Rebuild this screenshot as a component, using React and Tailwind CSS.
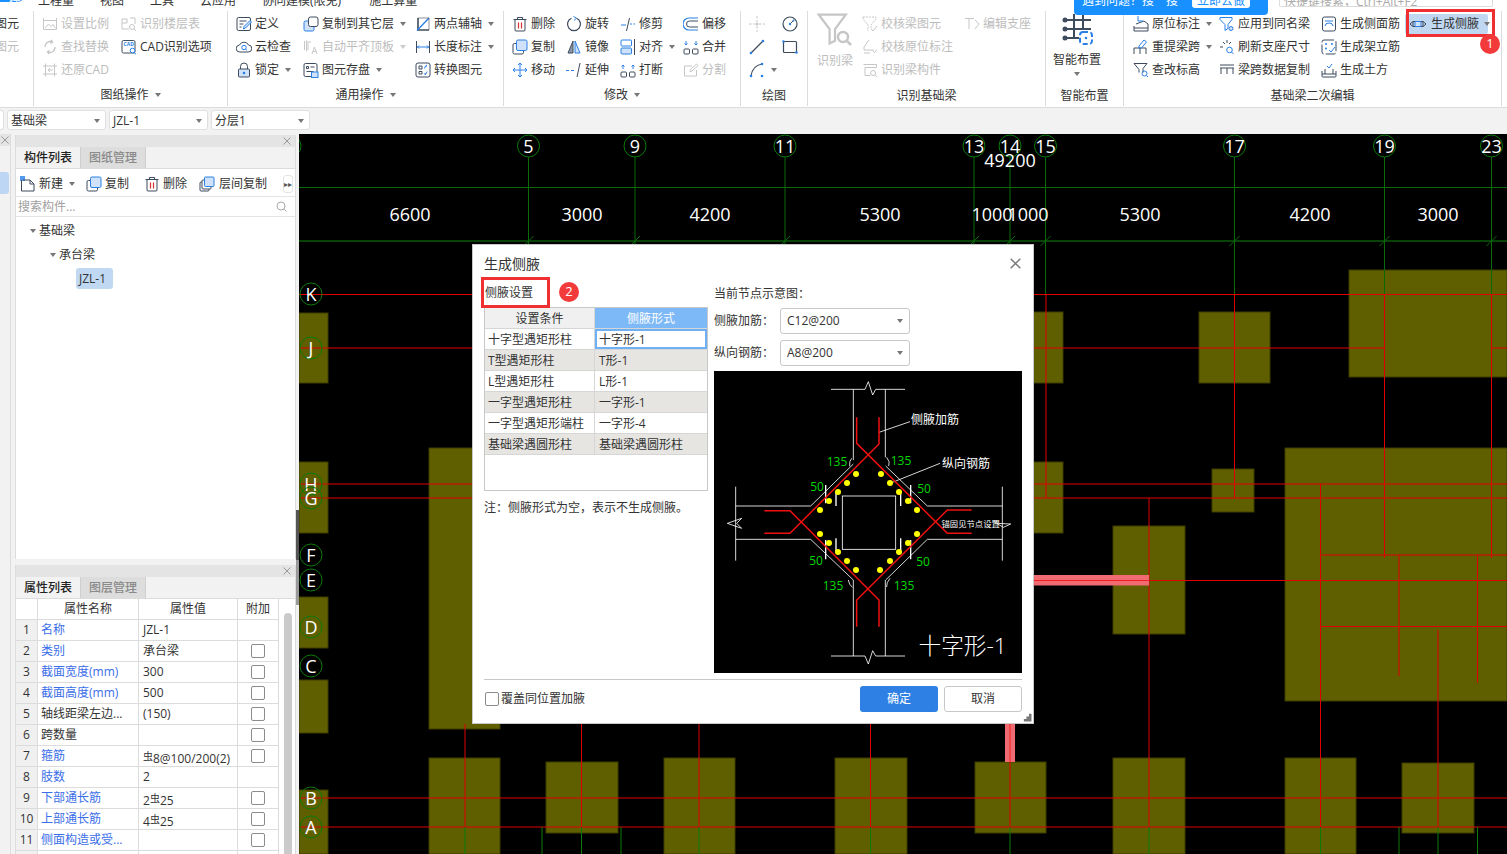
import React from "react";

const S = ({ children, size = 16, vb = "0 0 16 16" }) => (
  <svg width={size} height={size} viewBox={vb} fill="none" strokeWidth="1" className="shrink-0">{children}</svg>
);
const L = "#cfe2fa";
const icons = {
  scale: (c) => <><path d="M1.5 4.5h13v9h-13z M1.5 2v4 M14.5 2v4" stroke={c}/><path d="M3 12l3.5-4 2.500 2.500 2-2 2.500 3.500" stroke={c}/></>,
  find: (c) => <><path d="M3 8a5 5 0 0 1 7-5 M13 8a5 5 0 0 1-7 5 M9 1l1.500 2-2 1.500 M7 15l-1.500-2 2-1.500" stroke={c} strokeWidth="1.400"/></>,
  restore: (c) => <><path d="M1 4h14 M1 12h14 M3.500 1.500v13 M12.500 1.500v13" stroke={c}/><path d="M11 8H6l2-2 M6 8l2 2" stroke={c}/></>,
  floors: (c) => <><path d="M1 3h5v4H1z M1 7v6h7 M9 2h5v6" stroke={c}/><circle cx="11" cy="11" r="2.500" stroke={c}/><path d="M13 13l2 2" stroke={c}/></>,
  cad: (c, b) => <><rect x="1" y="1.500" width="13" height="12.500" rx="1.500" stroke={c}/><text x="2.500" y="7" fontSize="5" fontWeight="700" fill={b} fontFamily="Open Sans, sans-serif">CAD</text><circle cx="11.500" cy="11.500" r="2.300" fill="#fff" stroke={b}/><path d="M13 13.500l2 1.800" stroke={b}/></>,
  define: (c, b) => <><rect x="1" y="1.500" width="13.500" height="13" rx="1.500" stroke={c}/><path d="M3.500 5h7 M3.500 8h4 M3.500 11h2" stroke={c}/><path d="M7.500 13l.5-2.500 6-6 1.500 1.500-6 6z" fill={L} stroke={b}/></>,
  cloud: (c, b) => <><path d="M4 13a3.500 3.500 0 0 1-.5-7A5 5 0 0 1 12.500 6 3.500 3.500 0 0 1 12 13z" stroke={c}/><circle cx="8" cy="8.500" r="2.200" stroke={b}/><path d="M9.500 10l1.500 1.300" stroke={b}/></>,
  lock: (c, b) => <><path d="M4.500 7V4.500a3.500 3.500 0 0 1 7 0V7" stroke={c}/><rect x="2.500" y="7" width="11" height="8" rx="1" fill={L} stroke={c}/><circle cx="8" cy="11" r="1.300" fill={b}/></>,
  copyto: (c, b) => <><rect x="1" y="5" width="10" height="10" rx="1.500" fill={L} stroke={b}/><rect x="5.500" y="1" width="9.500" height="9.500" rx="2" fill="#fff" stroke={c}/></>,
  aligntop: (c) => <><path d="M1.500 2v9 M5 2v9 M3.500 1.500v11 M6 3h2 M9 15l2.500-7 2.500 7 M10 12.500h3" stroke={c}/></>,
  save: (c, b) => <><rect x="1" y="1.500" width="13" height="13" rx="1.500" stroke={c}/><path d="M3.500 4.500h2v2h-2z M7.500 5h4 M3.500 9.500h7" stroke={c}/><rect x="8.500" y="10" width="6.500" height="5.500" fill={L} stroke={b}/></>,
  twop: (c, b) => <><path d="M3 2v12h11" stroke={c} strokeWidth="1.600"/><path d="M2 14.500L14 2" stroke={b} strokeWidth="1.400"/><path d="M3 2h11v12" stroke={c} strokeWidth=".6"/></>,
  length: (c, b) => <><path d="M1.500 2v12 M14.500 2v12" stroke={c}/><path d="M2 8h12 M4 6.500L2.500 8 4 9.500 M12 6.500L13.500 8 12 9.500" stroke={b}/></>,
  convert: (c, b) => <><rect x="1" y="1" width="14" height="14" rx="2" stroke={c}/><path d="M4 4h3v3H4z M4 9.500h3v2.500H4z" stroke={c}/><path d="M9.500 6.500A2.500 2.500 0 0 1 12 4 M12 9.500a2.500 2.500 0 0 1-2.500 2.500 M10.500 4l1.500-1 M11 12.500l-1.500-.5" stroke={b}/></>,
  del: (c) => <><path d="M1.500 3.500h13 M5.500 3.500V1.500h5v2" stroke={c}/><path d="M3 3.500V14a1 1 0 0 0 1 1h8a1 1 0 0 0 1-1V3.500" stroke={c}/><path d="M6.500 6.500v6 M9.500 6.500v6" stroke="#e03030" strokeWidth="1.200"/></>,
  copy: (c, b) => <><rect x="1" y="4.500" width="10.500" height="10.500" rx="1.500" fill="#fff" stroke={c}/><rect x="4.500" y="1" width="10.500" height="10.500" rx="1.500" fill={L} stroke={b}/></>,
  move: (c, b) => <><path d="M8 1v14 M1 8h14 M6 3l2-2 2 2 M6 13l2 2 2-2 M3 6L1 8l2 2 M13 6l2 2-2 2" stroke={b}/></>,
  rotate: (c, b) => <><path d="M10.500 2.200A6.500 6.500 0 1 1 5.500 2.200" stroke={c} strokeWidth="1.200"/><path d="M7.500 .5L10.500 2.200 8 4.500" stroke={b}/></>,
  mirror: (c, b) => <><path d="M7 2L2 14h5z" fill="#8a97a5" stroke={c}/><path d="M9 2l5 12H9z" fill={L} stroke={b}/></>,
  trim: (c, b) => <><path d="M9.500 2l-3 13" stroke={c}/><path d="M1 9h5" stroke={b}/><path d="M10 8h5" stroke={b} strokeDasharray="2 1.500"/></>,
  offset: (c, b) => <><path d="M15 2H6a5.500 5.500 0 0 0 0 12h9" stroke={b} strokeWidth="1.200"/><path d="M15 5H6.500a2.500 2.500 0 0 0 0 6H15" stroke={c}/></>,
  alignv: (c, b) => <><rect x="1" y="1" width="10.500" height="6" rx="1" stroke={b}/><rect x="1" y="9" width="10.500" height="6" rx="1" fill={L} stroke={b}/><path d="M14.500 0v16" stroke={c}/></>,
  extend: (c, b) => <><path d="M0 8.500h9" stroke={b} strokeDasharray="3 2"/><path d="M14 1l-3 14" stroke={c}/></>,
  merge: (c, b) => <><rect x="1" y="10" width="5.500" height="5" rx="1" stroke={c}/><rect x="9.500" y="10" width="5.500" height="5" rx="1" stroke={c}/><path d="M3 2v4l-1.500-1.500 M3 6l1.500-1.500 M13 2v4l-1.500-1.500 M13 6l1.500-1.500" stroke={b}/></>,
  breakI: (c, b) => <><rect x="1" y="10" width="5.500" height="5" rx="1" stroke={c}/><rect x="9.500" y="10" width="5.500" height="5" rx="1" stroke={c}/><path d="M3 7V3L1.500 4.500 M3 3l1.500 1.500 M13 7V3l-1.500 1.500 M13 3l1.500 1.500" stroke={b}/></>,
  split: (c) => <><path d="M9 4H1.500v10h12V8" stroke={c}/><path d="M7 10l.5-2.500 6-5.500 1.500 1.500-6 5.500z" stroke={c}/></>,
  pt: (c) => <><path d="M8 0v6 M8 10v6 M0 8h6 M10 8h6" stroke={c} strokeDasharray="2.500 1.500"/><circle cx="8" cy="8" r="1.500" fill={c}/></>,
  circ: (c, b) => <><circle cx="8" cy="8" r="7" stroke={c} strokeWidth="1.200"/><path d="M8 8l3.500-3.500" stroke={c}/><circle cx="8" cy="8" r="1.200" fill={b}/><circle cx="11.500" cy="4.500" r="1" fill={b}/></>,
  line: (c, b) => <><path d="M2 14L14 2" stroke={c} strokeWidth="1.200"/><circle cx="2" cy="14" r="1.300" fill={b}/><circle cx="14" cy="2" r="1.300" fill={b}/></>,
  rect: (c, b) => <><rect x="1.500" y="2.500" width="13" height="11" rx="1" stroke={c} strokeWidth="1.200"/><circle cx="1.500" cy="2.500" r="1.200" fill={b}/><circle cx="14.500" cy="13.500" r="1.200" fill={b}/></>,
  arc: (c, b) => <><path d="M2 14C3 7 7 3 13 2" stroke={c} strokeWidth="1.200"/><circle cx="2" cy="14" r="1.300" fill={b}/><circle cx="13" cy="2" r="1.300" fill={b}/><circle cx="13" cy="14" r="1.300" fill={b}/></>,
  chk: (c) => <><path d="M1 1h13v2l-5 6v4 M1 1v2l5 6v6" stroke={c} strokeDasharray="2 1"/><path d="M9 13l2 2 4-5" stroke={c}/></>,
  chk2: (c) => <><path d="M7 1L2 8v3h10 M2 14h6" stroke={c}/><path d="M11 12l1.500 1.500 2.500-3" stroke={c}/></>,
  recog: (c) => <><path d="M1.500 2.500h13v3H3v8h5" stroke={c}/><circle cx="11" cy="11" r="2.500" stroke={c}/><path d="M13 13l2 2" stroke={c}/></>,
  edit: (c) => <><path d="M1 2.500h9 M5 2.500V13 M11 4l4 4-4 5" stroke={c}/></>,
  orig: (c, b) => <><path d="M3 8l8-3 4 3v4H1v-2" stroke={c}/><path d="M1 12v3h14v-3" stroke={c}/><path d="M5 0v5h5" stroke={b}/></>,
  apply: (c, b) => <><path d="M1 1.500h12v2l-4 5v4l-3 2v-6l-5-5z" stroke={b}/><circle cx="12" cy="12.500" r="2" fill={L} stroke={b}/></>,
  sideface: (c, b) => <><rect x="1.500" y="1" width="13" height="14" rx="2" stroke={c}/><path d="M4 5h8 M4 10a4 3 0 0 1 8 0" stroke={b}/></>,
  rise: (c, b) => <><path d="M1 15V9h12v6 M7 9v6" stroke={c}/><path d="M6 7l5-6 2.500 2-5 6H6z" stroke={b}/></>,
  refresh: (c, b) => <><path d="M1 8h3 M4 3l2 2 M8 1v3 M12 3l-2 2" stroke={c}/><circle cx="10.500" cy="11" r="2.800" stroke={b}/><path d="M12.500 13l2 2" stroke={b}/></>,
  frame: (c, b) => <><rect x="1" y="1" width="14" height="14" rx="2" stroke={c} strokeDasharray="10 2"/><circle cx="5" cy="5" r="1" fill={b}/><circle cx="11" cy="5" r="1" fill={b}/><circle cx="5" cy="9.500" r="1" fill={b}/><path d="M8 11l2 2 4-5" stroke={b}/></>,
  fun: (c, b) => <><path d="M1 1.500h13l-4 5v4" stroke={c}/><path d="M1 1.500l5 6v3" stroke={c}/><circle cx="11.500" cy="11.500" r="2.500" stroke={b}/><path d="M13.500 13.500l1.500 1.500" stroke={b}/></>,
  copydata: (c) => <><path d="M1 6h14 M1 3h14 M2 12V6 M8 12V6 M14 12V6" stroke={c}/></>,
  earth: (c, b) => <><path d="M1 9v5a1 1 0 0 0 1 1h12a1 1 0 0 0 1-1V9" stroke={c}/><path d="M1 12h14 M4 7v5 M12 7v5" stroke={c}/><path d="M6 4l2 2 3-4" stroke={b}/></>,
  newf: (c, b) => <><rect x="0" y="0" width="5" height="5" fill={b} opacity=".8"/><path d="M3 4h7l4 4v7H1.500V4 M10 4v4h4" stroke={c}/></>,
  layer: (c, b) => <><rect x="1" y="6" width="9" height="9" rx="1" stroke={c}/><rect x="3" y="4" width="9" height="9" rx="1" fill="#fff" stroke={c}/><rect x="5.500" y="1" width="9.500" height="9.500" rx="1" fill={L} stroke={b}/></>,
};

const Ic = ({ n, off }) => (
  <S>{icons[n](off ? "#c6c6c6" : "#3d4b5c", off ? "#c6c6c6" : "#2b80e6")}</S>
);
const Caret = ({ off, cls = "" }) => (
  <span className={`inline-block w-0 h-0 border-x-[3px] border-x-transparent border-t-[4px] ${off ? "border-t-[#ccc]" : "border-t-[#777]"} ${cls}`} />
);
const Item = ({ n, t, off, caret }) => (
  <div className={`flex items-center h-[23px] whitespace-nowrap ${off ? "text-[#bdbdbd]" : "text-[#333]"}`}>
    <Ic n={n} off={off} />
    {t && <span className="ml-[3px]">{t}</span>}
    {caret && <Caret off={off} cls="ml-[6px]" />}
  </div>
);
const GroupLabel = ({ t, caret, low }) => (
  <div className={`h-[20px] flex items-center justify-center text-[#333] ${low ? "pt-[4px]" : "pt-[1px]"}`}>
    {t}
    {caret && <Caret cls="ml-[6px]" />}
  </div>
);

function Ribbon() {
  return (
    <div className="h-[108px] bg-white border-b border-[#dcdcdc] shrink-0">
      <div className="h-[9px] overflow-hidden flex relative text-[#333]">
        <div className="w-[25px] h-[9px] bg-[#1890ff] rounded-br-[8px] text-white text-right -mt-[7px] leading-[16px] pr-[4px]">模</div>
        <div className="flex -mt-[7px] leading-[16px] whitespace-nowrap">
          <span className="ml-[13px]">工程量</span>
          <span className="ml-[26px]">视图</span>
          <span className="ml-[26px]">工具</span>
          <span className="ml-[26px]">云应用</span>
          <span className="ml-[26px]">协同建模(限免)</span>
          <span className="ml-[28px]">施工算量</span>
        </div>
      </div>
      <div className="flex h-[95px] mt-[2px]">
        <div className="w-[34px] border-r border-[#dcdcdc] pt-[1px] overflow-hidden">
          <div className="h-[23px] leading-[23px] -ml-[5px] text-[#333]">图元</div>
          <div className="h-[23px] leading-[23px] -ml-[5px] text-[#bdbdbd]">图元</div>
        </div>
        <div className="w-[194px] border-r border-[#dcdcdc] flex flex-col">
          <div className="h-[73px] pt-[1px] pl-[8px] grid grid-cols-[79px_1fr] grid-rows-[23px_23px_23px]">
            <Item n="scale" t="设置比例" off />
            <Item n="floors" t="识别楼层表" off />
            <Item n="find" t="查找替换" off />
            <Item n="cad" t="CAD识别选项" />
            <Item n="restore" t="还原CAD" off />
          </div>
          <GroupLabel t="图纸操作" caret />
        </div>
        <div className="w-[276px] border-r border-[#dcdcdc] flex flex-col">
          <div className="h-[73px] pt-[1px] pl-[8px] grid grid-cols-[67px_112px_1fr] grid-rows-[23px_23px_23px]">
            <Item n="define" t="定义" />
            <Item n="copyto" t="复制到其它层" caret />
            <Item n="twop" t="两点辅轴" caret />
            <Item n="cloud" t="云检查" />
            <Item n="aligntop" t="自动平齐顶板" off caret />
            <Item n="length" t="长度标注" caret />
            <Item n="lock" t="锁定" caret />
            <Item n="save" t="图元存盘" caret />
            <Item n="convert" t="转换图元" />
          </div>
          <GroupLabel t="通用操作" caret />
        </div>
        <div className="w-[237px] border-r border-[#dcdcdc] flex flex-col">
          <div className="h-[73px] pt-[1px] pl-[8px] grid grid-cols-[54px_54px_63px_1fr] grid-rows-[23px_23px_23px]">
            <Item n="del" t="删除" />
            <Item n="rotate" t="旋转" />
            <Item n="trim" t="修剪" />
            <Item n="offset" t="偏移" />
            <Item n="copy" t="复制" />
            <Item n="mirror" t="镜像" />
            <Item n="alignv" t="对齐" caret />
            <Item n="merge" t="合并" />
            <Item n="move" t="移动" />
            <Item n="extend" t="延伸" />
            <Item n="breakI" t="打断" />
            <Item n="split" t="分割" off />
          </div>
          <GroupLabel t="修改" caret />
        </div>
        <div className="w-[67px] border-r border-[#dcdcdc] flex flex-col">
          <div className="h-[73px] pt-[1px] pl-[8px] grid grid-cols-[33px_1fr] grid-rows-[23px_23px_23px]">
            <Item n="pt" off />
            <Item n="circ" />
            <Item n="line" />
            <Item n="rect" />
            <Item n="arc" caret />
          </div>
          <GroupLabel t="绘图" low />
        </div>
        <div className="w-[238px] border-r border-[#dcdcdc] flex flex-col">
          <div className="h-[73px] pt-[1px] pl-[9px] flex">
            <div className="w-[45px] flex flex-col items-start text-[#bdbdbd]">
              <S size={36} vb="0 0 36 36">
                <path d="M2 3h30l-12 16v13l-6 3V19z" stroke="#c6c6c6" strokeWidth="2.500" fill="none" transform="scale(.9)" />
                <circle cx="26" cy="25" r="5" stroke="#c6c6c6" strokeWidth="2.500" fill="#fff" />
                <path d="M30 29l4 4" stroke="#c6c6c6" strokeWidth="2.500" />
              </S>
              <span className="mt-[4px]">识别梁</span>
            </div>
            <div className="grid grid-cols-[102px_1fr] grid-rows-[23px_23px_23px]">
              <Item n="chk" t="校核梁图元" off />
              <Item n="edit" t="编辑支座" off />
              <Item n="chk2" t="校核原位标注" off />
              <div />
              <Item n="recog" t="识别梁构件" off />
            </div>
          </div>
          <GroupLabel t="识别基础梁" low />
        </div>
        <div className="w-[78px] border-r border-[#dcdcdc] flex flex-col">
          <div className="h-[73px] pl-[7px] pt-[3px] flex flex-col items-start text-[#333]">
            <div className="w-[48px] flex flex-col items-center">
              <S size={31} vb="0 0 31 31">
                <path d="M5 6h24 M5 15h24 M5 24h12 M12 0v24 M21 0v14" stroke="#3d4b5c" strokeWidth="2" />
                <circle cx="3" cy="6" r="2.500" fill="#3d4b5c" />
                <circle cx="3" cy="15" r="2.500" fill="#3d4b5c" />
                <circle cx="3" cy="24" r="2.500" fill="#3d4b5c" />
                <rect x="18" y="18" width="12" height="12" rx="3" stroke="#2b80e6" strokeWidth="2" strokeDasharray="5 2.500" fill="#fff" />
                <circle cx="24" cy="24" r="1.300" fill="#2b80e6" />
              </S>
              <span className="whitespace-nowrap mt-[6px]">智能布置</span>
              <Caret cls="mt-[3px]" />
            </div>
          </div>
          <GroupLabel t="智能布置" low />
        </div>
        <div className="w-[378px] border-r border-[#dcdcdc] flex flex-col">
          <div className="h-[73px] pt-[1px] pl-[9px] grid grid-cols-[86px_102px_86px_1fr] grid-rows-[23px_23px_23px]">
            <Item n="orig" t="原位标注" caret />
            <Item n="apply" t="应用到同名梁" />
            <Item n="sideface" t="生成侧面筋" />
            <div className="flex items-center h-[20px] -ml-[2px] mt-[2px] w-[83px] bg-[#bfd7f0] rounded-[2px] text-[#333] pl-[5px] whitespace-nowrap">
              <S size={16}>
                <path d="M0 8l3-2.500h10L16 8l-3 2.500H3z M3 5.500v5 M13 5.500v5" stroke="#3d4b5c" />
                <rect x="5" y="5.500" width="6" height="5" rx="1" stroke="#2b80e6" fill={L} />
              </S>
              <span className="ml-[5px]">生成侧腋</span>
              <Caret cls="ml-[5px]" />
            </div>
            <Item n="rise" t="重提梁跨" caret />
            <Item n="refresh" t="刷新支座尺寸" />
            <Item n="frame" t="生成架立筋" />
            <div />
            <Item n="fun" t="查改标高" />
            <Item n="copydata" t="梁跨数据复制" />
            <Item n="earth" t="生成土方" />
          </div>
          <GroupLabel t="基础梁二次编辑" low />
        </div>
      </div>
    </div>
  );
}

const Sel = ({ t }) => (
  <div className="w-[99px] ml-[3px] h-[20px] bg-white border border-[#e0e0e0] rounded-[3px] flex items-center justify-between pl-[3px] pr-[5px] pt-[1px] text-[#333]">
    <span>{t}</span>
    <Caret />
  </div>
);

function Toolbar() {
  return (
    <div className="h-[26px] bg-[#f2f2f2] flex items-start pt-[2px] shrink-0">
      <div className="w-[4px] h-[20px] bg-white border-y border-r border-[#e0e0e0] rounded-r-[3px]" />
      <Sel t="基础梁" />
      <Sel t="JZL-1" />
      <Sel t="分层1" />
    </div>
  );
}

const Close = ({ c = "#999", s = 8 }) => (
  <svg width={s} height={s} viewBox="0 0 8 8" className="shrink-0"><path d="M.5.5l7 7M7.500.5l-7 7" stroke={c} strokeWidth="1" /></svg>
);
const PanelHead = () => (
  <div className="h-[12px] shrink-0 bg-[#e4e4e4] flex items-center justify-end pr-[4px]"><Close /></div>
);
const Tabs = ({ a, b }) => (
  <div className="h-[22px] shrink-0 flex bg-[#f2f2f2] border-b border-[#dcdcdc]">
    <div className="w-[65px] flex items-center justify-center text-[#222] font-medium border-r border-[#cfcfcf]">{a}</div>
    <div className="w-[65px] flex items-center justify-center text-[#8a8a8a] font-medium bg-[#dddddd] border-r border-[#cfcfcf]">{b}</div>
  </div>
);

function ListPanel() {
  return (
    <div className="h-[424px] shrink-0 flex flex-col bg-white border-x border-[#dcdcdc]">
      <PanelHead />
      <Tabs a="构件列表" b="图纸管理" />
      <div className="h-[28px] shrink-0 border-b border-[#e4e4e4] flex items-center pl-[4px] pt-[2px] text-[#333]">
        <Ic n="newf" />
        <span className="ml-[3px]">新建</span>
        <Caret cls="ml-[6px]" />
        <span className="ml-[11px]"><Ic n="copy" /></span>
        <span className="ml-[3px]">复制</span>
        <span className="ml-[15px]"><Ic n="del" /></span>
        <span className="ml-[3px]">删除</span>
        <span className="ml-[12px]"><Ic n="layer" /></span>
        <span className="ml-[4px]">层间复制</span>
        <div className="ml-auto mr-[2px] w-[10px] h-[18px] border border-[#e4e4e4] rounded-[3px] flex items-center justify-center text-[8px] leading-none text-[#555]">▸▸</div>
      </div>
      <div className="h-[20px] shrink-0 border-b border-[#e4e4e4] flex items-center justify-between pl-[2px] pr-[8px] text-[#a0a0a0]">
        <span>搜索构件...</span>
        <svg width="11" height="11" viewBox="0 0 11 11" fill="none"><circle cx="5" cy="5" r="4" stroke="#aaa" /><path d="M8 8l2.500 2.500" stroke="#aaa" /></svg>
      </div>
      <div className="flex-1 text-[#333] pt-[2px]">
        <div className="h-[24px] flex items-center pl-[14px]"><Caret cls="mr-[3px]" />基础梁</div>
        <div className="h-[24px] flex items-center pl-[34px]"><Caret cls="mr-[3px]" />承台梁</div>
        <div className="ml-[60px] mt-[1px] w-[37px] h-[21px] bg-[#c0d8f2] rounded-[3px] flex items-center pl-[3px]">JZL-1</div>
      </div>
    </div>
  );
}

const Steel = () => <span className="text-[10px] align-[3px]">虫</span>;
const props = [
  ["名称", "JZL-1", 1, 0],
  ["类别", "承台梁", 1, 1],
  ["截面宽度(mm)", "300", 1, 1],
  ["截面高度(mm)", "500", 1, 1],
  ["轴线距梁左边...", "(150)", 0, 1],
  ["跨数量", "", 0, 1],
  ["箍筋", <><Steel />8@100/200(2)</>, 1, 1],
  ["肢数", "2", 1, 0],
  ["下部通长筋", <>2<Steel />25</>, 1, 1],
  ["上部通长筋", <>4<Steel />25</>, 1, 1],
  ["侧面构造或受...", "", 1, 1],
  ["", "", 0, 1],
];

function PropPanel() {
  return (
    <div className="flex-1 flex flex-col bg-white border-x border-[#dcdcdc] overflow-hidden mt-[6px]">
      <PanelHead />
      <Tabs a="属性列表" b="图层管理" />
      <div className="flex shrink-0">
        <div className="w-[263px]">
          <div className="grid grid-cols-[22px_101px_99px_41px] h-[21px] text-[#333] text-center leading-[20px] border-b border-[#dcdcdc]">
            <div className="border-r border-[#dcdcdc]" />
            <div className="border-r border-[#dcdcdc]">属性名称</div>
            <div className="border-r border-[#dcdcdc]">属性值</div>
            <div className="border-r border-[#dcdcdc]">附加</div>
          </div>
          {props.map((p, i) => (
            <div key={i} className="grid grid-cols-[22px_101px_99px_41px] h-[21px] leading-[20px] border-b border-[#dcdcdc] text-[#333]">
              <div className="bg-[#f0f0f0] border-r border-[#dcdcdc] text-center">{i < 11 ? i + 1 : ""}</div>
              <div className={`border-r border-[#dcdcdc] pl-[3px] whitespace-nowrap ${p[2] ? "text-[#3a6ee8]" : ""}`}>{p[0]}</div>
              <div className="border-r border-[#dcdcdc] pl-[4px] whitespace-nowrap overflow-hidden">{p[1]}</div>
              <div className="border-r border-[#dcdcdc] flex items-center justify-center">
                {p[3] ? <span className="block w-[14px] h-[14px] border border-[#8c8c8c] rounded-[2px] bg-white" /> : null}
              </div>
            </div>
          ))}
        </div>
        <div className="ml-[5px] mt-[14px] w-[8px] h-[260px] bg-[#cacaca] rounded-t-[4px]" />
      </div>
    </div>
  );
}

function LeftPane() {
  return (
    <div className="w-[299px] bg-[#f2f2f2] flex shrink-0">
      <div className="w-[11px] border-r border-[#dcdcdc] flex flex-col">
        <div className="h-[12px] bg-[#e4e4e4] flex items-center pl-[1px]"><Close /></div>
        <div className="mt-[26px] w-[9px] h-[22px] bg-[#bcd6f3] rounded-r-[3px]" />
      </div>
      <div className="w-[281px] ml-[4px] pt-[1px] flex flex-col">
        <ListPanel />
        <PropPanel />
      </div>
      <div className="w-[3px] flex flex-col">
        <div className="h-[376px]" />
        <div className="h-[50px] bg-[#555]" />
        <div className="h-[45px] bg-[#999]" />
      </div>
    </div>
  );
}

const OLIVE = [
  [299, 313, 29, 70], [299, 462, 29, 71], [299, 597, 29, 51], [299, 680, 29, 53], [299, 790, 29, 64],
  [429, 448, 71, 281], [429, 758, 71, 96], [546, 762, 72, 71], [664, 758, 71, 96], [835, 758, 72, 96], [975, 762, 71, 71],
  [1000, 312, 63, 71], [1199, 312, 71, 71], [1000, 462, 63, 71], [1212, 469, 42, 43], [1349, 270, 158, 107],
  [1285, 448, 222, 253], [1113, 526, 72, 108], [1113, 758, 72, 96], [1285, 758, 71, 96], [1402, 763, 72, 70],
];
const AX_V = [[528.5, "5"], [635, "9"], [785, "11"], [974, "13"], [1010, "14"], [1045.5, "15"], [1234.5, "17"], [1384.5, "19"], [1491.5, "23"]];
const AX_H = [["K", 294], ["J", 348], ["H", 484], ["G", 498], ["F", 555], ["E", 580], ["D", 627], ["C", 666], ["B", 798], ["A", 827]];
const DIM = [["6600", 410], ["3000", 582], ["4200", 710], ["5300", 880], ["1000", 992], ["1000", 1028], ["5300", 1140], ["4200", 1310], ["3000", 1438]];
const RED_V = [
  [1046, 294, 498], [1234.5, 294, 498], [1384.5, 294, 558], [1491.5, 294, 558], [1149, 498, 827], [1320.5, 484, 827],
  [1399, 555, 676], [1477.5, 555, 683], [1438, 630, 827], [1010, 720, 827], [465, 724, 827], [581.5, 720, 827], [699, 720, 827], [870.5, 720, 827],
];
const RED_H = [
  [299, 1507, 294.500], [299, 1384.500, 348], [1491.500, 1507, 348], [299, 1507, 484], [299, 1507, 498], [1320, 1507, 555],
  [1149, 1507, 580.500], [1320, 1507, 626.500], [299, 1507, 798], [299, 1507, 827],
];
const GREEN_BOT = [465, 542, 581.5, 621, 699, 870.5, 1010, 1149, 1320.5, 1399, 1438, 1477.5];
const FONT = "'Open Sans','Noto Sans CJK SC',sans-serif";

function Canvas() {
  return (
    <svg viewBox="299 134 1208 720" width="1208" height="720" className="block bg-black shrink-0">
      {OLIVE.map((r, i) => (
        <rect key={i} x={r[0]} y={r[1]} width={r[2]} height={r[3]} fill="#5f5f00" stroke="#3f3f00" strokeWidth="1" />
      ))}
      <path d="M299 187.500H1507" stroke="#0a6a0a" />
      <path d="M299 241H1507" stroke="#0a5a0a" strokeWidth="1.500" />
      {AX_V.map(([x, t]) => (
        <g key={t}>
          <path d={`M${x} 157V294`} stroke="#0a6a0a" />
          <path d={`M${x - 5} 246L${x + 5} 236`} stroke="#0a6a0a" />
          <circle cx={x} cy="146" r="11" stroke="#0a7a0a" fill="none" />
          <text x={x} y="152.500" textAnchor="middle" fontSize="18" fill="#fff" fontFamily={FONT}>{t}</text>
        </g>
      ))}
      <circle cx="290" cy="146" r="11" stroke="#0a7a0a" fill="none" />
      {RED_H.map((l, i) => <path key={i} d={`M${l[0]} ${l[2]}H${l[1]}`} stroke="#e00000" />)}
      {RED_V.map((l, i) => <path key={i} d={`M${l[0]} ${l[1]}V${l[2]}`} stroke="#e00000" />)}
      {GREEN_BOT.map((x) => <path key={x} d={`M${x} 827V854`} stroke="#0a7a0a" />)}
      <rect x="1000" y="575" width="149" height="10.500" fill="#f06a72" />
      <path d="M1000 580.500H1149" stroke="#f02020" />
      <rect x="1005" y="724" width="10" height="38" fill="#f06a72" />
      <path d="M1010 724V762" stroke="#f02020" />
      {DIM.map(([t, x], i) => (
        <text key={i} x={x} y="220.500" textAnchor="middle" fontSize="18" fill="#fff" fontFamily={FONT}>{t}</text>
      ))}
      <text x="1010" y="167" textAnchor="middle" fontSize="18" fill="#fff" fontFamily={FONT}>49200</text>
      {AX_H.map(([t, y]) => (
        <g key={t}>
          <circle cx="311" cy={y} r="11" stroke="#0a7a0a" fill="none" />
          <text x="311" y={y + 6.500} textAnchor="middle" fontSize="18" fill="#fff" fontFamily={FONT}>{t}</text>
        </g>
      ))}
    </svg>
  );
}

function Diagram() {
  const dots = [[438,312],[411,339],[384,366],[357,393],[330,420],[513,312],[540,339],[567,366],[594,393],[621,420],[330,492],[357,519],[384,546],[411,573],[438,600],[621,492],[594,519],[567,546],[540,573],[510,600]];
  const T = ({ x, y, s = 36, c = "#fff", a = "middle", w, children }) => (
    <text x={x} y={y} fontSize={s} fill={c} textAnchor={a} fontWeight={w} fontFamily={FONT}>{children}</text>
  );
  return (
    <svg viewBox="12 3 924 906" width="308" height="302" className="block bg-black shrink-0">
      <g stroke="#fff" strokeWidth="2.500" fill="none">
        <path d="M363 58H465L475 35 488 75 497 58H585" />
        <path d="M363 858H465L475 882 488 842 497 858H585" />
        <path d="M430 58V270 M526 58V262 M430 630V858 M526 630V858" />
        <path d="M77 350V572 M877 350V572 M77 408H302 M77 508H302 M652 408H877 M652 508H877" />
        <path d="M527 288L652 408 M652 508L527 630 M302 508L430 630 M302 408L430 282" />
        <path d="M52 460L95 445 80 460 95 475z" />
        <path d="M860 460L902 462 880 472z" />
        <rect x="397" y="378" width="160" height="160" />
        <path d="M347 345V400 M378 365V408 M602 345V400 M572 365V408 M347 510V568 M378 505V548 M602 510V568 M572 505V548" strokeWidth="4" />
        <path d="M507 187L600 155 M540 340L690 280" />
        <path d="M425 265q-8 8-6 24 M530 262q12 14 6 26 M415 630q2 14 12 22 M540 625q-12 14-10 26" />
      </g>
      <g stroke="#f01010" strokeWidth="4.500" fill="none">
        <path d="M440 142V220L712 490H785" />
        <path d="M507 142V222L240 490H163" />
        <path d="M163 422H240L507 690V770" />
        <path d="M785 420H712L440 690V770" />
      </g>
      {dots.map((d, i) => <circle key={i} cx={d[0]} cy={d[1]} r="9" fill="#ffff00" />)}
      <T x={381} y={288} c="#00d800">135</T>
      <T x={573} y={284} c="#00d800">135</T>
      <T x={369} y={659} c="#00d800">135</T>
      <T x={582} y={659} c="#00d800">135</T>
      <T x={321} y={362} c="#00d800">50</T>
      <T x={642} y={368} c="#00d800">50</T>
      <T x={318} y={584} c="#00d800">50</T>
      <T x={639} y={587} c="#00d800">50</T>
      <T x={675} y={162}>侧腋加筋</T>
      <T x={768} y={295}>纵向钢筋</T>
      <T x={782} y={470} s={25}>锚固见节点设置</T>
      <T x={758} y={852} s={68} w={300}>十字形-1</T>
    </svg>
  );
}

const rules = [
  ["十字型遇矩形柱", "十字形-1"],
  ["T型遇矩形柱", "T形-1"],
  ["L型遇矩形柱", "L形-1"],
  ["一字型遇矩形柱", "一字形-1"],
  ["一字型遇矩形端柱", "一字形-4"],
  ["基础梁遇圆形柱", "基础梁遇圆形柱"],
];

function RuleTable() {
  return (
    <div className="w-[224px] h-[184px] border border-[#c8c8c8] text-[#333]">
      <div className="flex h-[20px] leading-[21px] text-center">
        <div className="w-[110px] bg-[#f0f0f0] border-r border-[#d8d8d8]">设置条件</div>
        <div className="flex-1 bg-[#7db8f7] text-white">侧腋形式</div>
      </div>
      {rules.map((r, i) => (
        <div key={i} className={`flex h-[21px] leading-[21px] border-t border-[#d6d6d6] ${i % 2 ? "bg-[#e6e5e2]" : "bg-white"}`}>
          <div className="w-[110px] pl-[3px] border-r border-[#d6d6d6] whitespace-nowrap">{r[0]}</div>
          <div className={`flex-1 whitespace-nowrap ${i === 0 ? "border-2 border-[#6db0f5] pl-[2px] leading-[17px]" : "pl-[4px]"}`}>{r[1]}</div>
        </div>
      ))}
      <div className="border-t border-[#d6d6d6]" />
    </div>
  );
}

const DlgSel = ({ t }) => (
  <div className="w-[130px] h-[26px] border border-[#c8c8c8] rounded-[3px] flex items-center justify-between pl-[6px] pr-[6px]">
    <span>{t}</span>
    <Caret />
  </div>
);

function Dialog() {
  return (
    <div className="absolute left-[472px] top-[244px] w-[562px] h-[480px] bg-white border border-[#c8c8c8] text-[#333] flex flex-col px-[11px]">
      <div className="h-[36px] flex items-center justify-between shrink-0">
        <span className="text-[14px]">生成侧腋</span>
        <span className="mr-[1px]"><Close c="#777" s={11} /></span>
      </div>
      <div className="flex h-[397px] shrink-0">
        <div className="w-[230px]">
          <div className="h-[26px] leading-[20px] pt-[2px] pl-[1px]">侧腋设置</div>
          <RuleTable />
          <div className="mt-[8px]">注：侧腋形式为空，表示不生成侧腋。</div>
        </div>
        <div className="flex-1">
          <div className="h-[26px] leading-[26px]">当前节点示意图：</div>
          <div className="flex items-center h-[27px]">
            <span className="w-[66px]">侧腋加筋：</span>
            <DlgSel t="C12@200" />
          </div>
          <div className="flex items-center h-[27px] mt-[5px]">
            <span className="w-[66px]">纵向钢筋：</span>
            <DlgSel t="A8@200" />
          </div>
          <div className="mt-[5px]"><Diagram /></div>
        </div>
      </div>
      <div className="border-t border-[#c8c8c8] mt-[1px] flex items-center h-[38px] shrink-0">
        <span className="w-[14px] h-[14px] ml-[1px] border border-[#8c8c8c] rounded-[2px]" />
        <span className="ml-[2px]">覆盖同位置加腋</span>
        <div className="ml-auto w-[78px] h-[26px] rounded-[3px] bg-[#2e80e4] text-white flex items-center justify-center">确定</div>
        <div className="ml-[6px] w-[78px] h-[26px] rounded-[3px] border border-[#c8c8c8] flex items-center justify-center">取消</div>
      </div>
      <svg width="9" height="9" viewBox="0 0 9 9" className="absolute right-[1px] bottom-[1px]">
        <path d="M6 0h3v3H6z M3 3h3v3H3z M6 3h3v3H6z M0 6h3v3H0z M3 6h3v3H3z M6 6h3v3H6z" fill="#777" transform="scale(.85) translate(1 1)" />
      </svg>
    </div>
  );
}

const Badge = ({ n, cls }) => (
  <div className={`absolute w-[20px] h-[20px] rounded-full bg-[#f23a3a] text-white text-[13px] flex items-center justify-center ${cls}`}>{n}</div>
);

export default function App() {
  return (
    <div
      className="relative w-[1507px] h-[854px] overflow-hidden flex flex-col bg-white text-[12px] leading-normal"
      style={{ fontFamily: "'Open Sans','Noto Sans CJK SC',sans-serif" }}
    >
      <Ribbon />
      <Toolbar />
      <div className="flex flex-1 min-h-0">
        <LeftPane />
        <Canvas />
      </div>
      <Dialog />

      <div className="absolute left-[1074px] top-0 w-[194px] h-[15px] bg-[#1890ff] rounded-b-[4px] overflow-hidden flex items-start pl-[8px] text-white whitespace-nowrap leading-[14px]">
        <span className="-mt-[6px]">遇到问题？搜一搜</span>
        <span className="ml-[14px] h-[8px] bg-white text-[#1890ff] px-[5px] rounded-b-[3px] overflow-hidden"><span className="block -mt-[6px]">立即去做</span></span>
      </div>
      <div className="absolute left-[1279px] top-0 w-[214px] h-[7px] border border-t-0 border-[#dcdcdc] overflow-hidden text-[#aaa] pl-[4px] leading-[4px] whitespace-nowrap rounded-b-[2px]">快捷键搜索，Ctrl+Alt+F2</div>

      <div className="absolute left-[1406px] top-[9px] w-[89px] h-[28px] border-[3px] border-[#f03030]" />
      <Badge n="1" cls="left-[1480px] top-[34px]" />
      <div className="absolute left-[481px] top-[277px] w-[69px] h-[31px] border-[3px] border-[#f03030]" />
      <Badge n="2" cls="left-[559px] top-[282px]" />
    </div>
  );
}
